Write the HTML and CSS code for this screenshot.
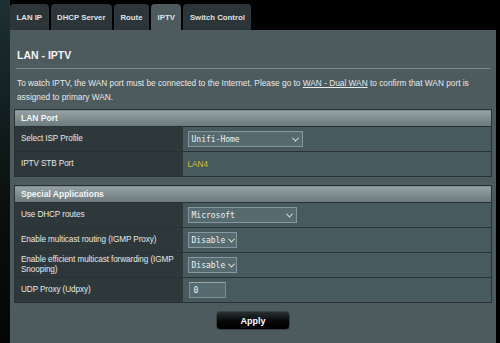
FILE: index.html
```html
<!DOCTYPE html>
<html>
<head>
<meta charset="utf-8">
<link rel="stylesheet" href="styles.css">
</head>
<body>
<div class="page">
  <div class="side"></div>
  <div class="main">
    <div class="tabs">
      <div class="tab">LAN IP</div>
      <div class="tab">DHCP Server</div>
      <div class="tab">Route</div>
      <div class="tab active">IPTV</div>
      <div class="tab">Switch Control</div>
    </div>
    <div class="panel">
      <div class="title">LAN - IPTV</div>
      <div class="rule"></div>
      <p class="desc">To watch IPTV, the WAN port must be connected to the Internet. Please go to <a href="#">WAN - Dual WAN</a> to confirm that WAN port is assigned to primary WAN.</p>

      <table class="form">
        <thead><tr><th colspan="2">LAN Port</th></tr></thead>
        <tbody>
          <tr><td class="lbl">Select ISP Profile</td><td class="val"><div class="sel w115"><span>Unifi-Home</span><i class="chev"></i></div></td></tr>
          <tr><td class="lbl">IPTV STB Port</td><td class="val"><span class="port">LAN4</span></td></tr>
        </tbody>
      </table>

      <table class="form">
        <thead><tr><th colspan="2">Special Applications</th></tr></thead>
        <tbody>
          <tr><td class="lbl">Use DHCP routes</td><td class="val"><div class="sel w109"><span>Microsoft</span><i class="chev"></i></div></td></tr>
          <tr><td class="lbl">Enable multicast routing (IGMP Proxy)</td><td class="val"><div class="sel w49"><span>Disable</span><i class="chev"></i></div></td></tr>
          <tr><td class="lbl">Enable efficient multicast forwarding (IGMP Snooping)</td><td class="val"><div class="sel w49"><span>Disable</span><i class="chev"></i></div></td></tr>
          <tr><td class="lbl">UDP Proxy (Udpxy)</td><td class="val"><div class="inp">0</div></td></tr>
        </tbody>
      </table>

      <div class="actions"><button class="apply">Apply</button></div>
    </div>
  </div>
</div>
</body>
</html>
```

FILE: styles.css
```css
* { box-sizing: border-box; }
html, body { margin: 0; padding: 0; background: #000; }
body { font-family: "Liberation Sans", Arial, sans-serif; color: #e8ecec; width: 500px; height: 343px; overflow: hidden; }

.page { display: flex; height: 343px; }
.side { width: 10px; background: linear-gradient(180deg, #1d3034 0%, #13201f 30%, #0b0f10 60%, #050505 100%); }
.main { width: 486px; display: flex; flex-direction: column; }

.tabs { display: flex; gap: 2px; padding-top: 4px; height: 30px; }
.tab {
  height: 26px; padding: 0 6.5px; display: flex; align-items: center;
  background: #2c3538; color: #dfe3e4; font-size: 7.8px; font-weight: bold;
  border-radius: 4px 4px 0 0;
}
.tab.active { background: #4d5a5e; }

.panel { flex: 1; background: #4d5a5e; padding: 19px 4px 0 4px; }
.title { font-size: 10.5px; font-weight: bold; padding-left: 3px; line-height: 12px; color: #f2f4f4; }
.rule { height: 1px; background: #7f8b8f; margin: 7px 2px 0 2px; }
.desc { margin: 7px 0 5px 0; padding-left: 3px; font-size: 8.3px; line-height: 14px; color: #e6eaea; }
.desc a { color: #e6eaea; text-decoration: underline; }

.form { width: 478px; border-collapse: collapse; border: 1px solid #2a3134; margin-bottom: 8px; }
.form th {
  height: 17px; text-align: left; padding: 0 0 0 6px; font-size: 8.5px; font-weight: bold; color: #f4f6f6;
  background: linear-gradient(180deg, #95a3a7 0%, #7b898d 60%, #6b787c 100%);
  border-bottom: 1px solid #2a3134;
}
.form td { height: 25px; border-bottom: 1px solid #2a3134; font-size: 8.2px; padding: 0; }
.form .lbl { width: 168px; background: #2e383b; padding-left: 6px; line-height: 10px; color: #e4e8e8; letter-spacing: -0.1px; }
.form .val { background: #475a5e; padding-left: 5px; }

.sel {
  height: 16px; display: flex; align-items: center; justify-content: space-between;
  background: #566b70; border: 1px solid #8797a0; padding: 0 4px 0 3px;
  font-family: "DejaVu Sans Mono", "Liberation Mono", monospace; font-size: 8px; color: #eef2f2;
}
.w115 { width: 115px; }
.w109 { width: 109px; }
.w49 { width: 49px; padding-right: 2px; }
.chev { width: 5px; height: 5px; border-right: 1.5px solid #e8eeee; border-bottom: 1.5px solid #e8eeee; transform: rotate(45deg) translate(-1px, -1px); display: block; }
.port { color: #d8bd3a; font-size: 8.2px; }
.inp {
  width: 37px; height: 16px; background: #566b70; border: 1px solid #7d8d92; border-top-color: #9aa7ab;
  font-family: "DejaVu Sans Mono", "Liberation Mono", monospace; font-size: 8px; color: #eef2f2; padding: 3px 0 0 4px; margin-left: 1px;
}

.actions { display: flex; padding-left: 202px; }
.apply {
  width: 74px; height: 19px; border-radius: 4px; border: 1px solid #3a4144;
  background: linear-gradient(180deg, #2a3033 0%, #050607 55%, #000 100%);
  color: #fff; font-family: "Liberation Sans", Arial, sans-serif; font-weight: bold; font-size: 9px;
}
```
